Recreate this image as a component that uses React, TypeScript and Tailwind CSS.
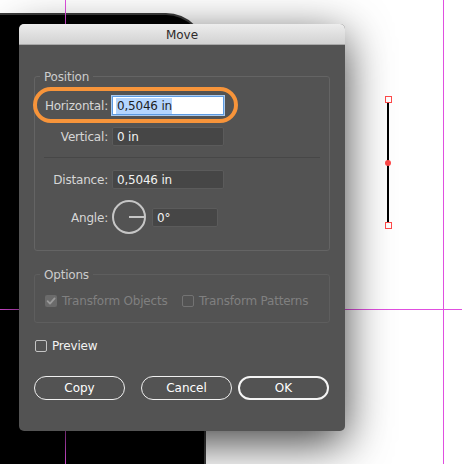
import React from "react";

function Box({ checked, disabled }: { checked?: boolean; disabled?: boolean }) {
  if (checked) {
    return (
      <div className="flex h-[12px] w-[12px] shrink-0 items-center justify-center rounded-[2px] bg-[#6b6b6b]">
        <svg width="12" height="12" viewBox="0 0 12 12">
          <path d="M2.6 6.2 L5 8.6 L9.6 3.4" fill="none" stroke="#9a9a9a" strokeWidth="1.8" strokeLinecap="round" strokeLinejoin="round" />
        </svg>
      </div>
    );
  }
  return (
    <div
      className={
        disabled
          ? "h-[12px] w-[12px] shrink-0 rounded-[2px] border border-[#737373]"
          : "h-[12px] w-[12px] shrink-0 rounded-[2px] border border-[#c4c4c4]"
      }
    />
  );
}

function Label({ children }: { children: React.ReactNode }) {
  return <div className="w-[73px] shrink-0 pt-[1px] text-right text-[#d6d6d6]">{children}</div>;
}

function DarkInput({ value, width }: { value: string; width: string }) {
  return (
    <div className={`flex h-[19px] items-center rounded-[2px] border border-[#5b5b5b] bg-[#464646] pl-[4px] pt-[1px] text-[#f2f2f2] ${width}`}>
      {value}
    </div>
  );
}

export default function App() {
  return (
    <div className="relative h-[464px] w-[462px] overflow-hidden bg-white font-['DejaVu_Sans',sans-serif] text-[12px] leading-[14px] tracking-[-0.2px]">
      {/* black artboard shape */}
      <div className="absolute left-[-10px] top-[13px] h-[470px] w-[216px] rounded-tr-[40px] border-r-2 border-t-2 border-[#3b3b3b] bg-black" />

      {/* guides */}
      <div className="absolute left-[65px] top-0 h-full w-px bg-[#e04fe0]" />
      <div className="absolute left-0 top-[309px] h-px w-full bg-[#e04fe0]" />
      <div className="absolute left-[443px] top-0 h-full w-px bg-[#e04fe0]" />

      {/* selected line */}
      <div className="absolute left-[387px] top-[102px] h-[121px] w-[2px] bg-black" />
      <div className="absolute left-[385px] top-[96px] h-[7px] w-[7px] border border-[#ff4a4a] bg-white" />
      <div className="absolute left-[385px] top-[222px] h-[7px] w-[7px] border border-[#ff4a4a] bg-white" />
      <div className="absolute left-[385px] top-[160px] h-[6px] w-[6px] rounded-full bg-[#ff4a4a]" />

      {/* dialog */}
      <div className="absolute left-[19px] top-[24px] flex h-[407px] w-[326px] flex-col overflow-hidden rounded-[5px] bg-[#535353] shadow-[0_12px_45px_rgba(0,0,0,0.75)]">
        <div className="flex h-[21px] shrink-0 items-center justify-center border-b border-[#a8a8a8] bg-gradient-to-b from-[#ededed] to-[#d2d2d2] pt-[1px] tracking-normal text-[#2e2a2a]">
          Move
        </div>

        <div className="flex flex-col px-[15px] pt-[24px]">
          <fieldset className="rounded-[3px] border border-[#646464] pb-[16px] pt-[12px]">
            <legend className="ml-[5px] px-[4px] pt-[1px] leading-[14px] text-[#cccccc]">Position</legend>

            <div className="flex h-[19px] items-center">
              <Label>Horizontal:</Label>
              <div className="ml-[4px] flex h-[19px] w-[112px] items-center border border-[#5d9ae0] bg-white pl-[3px] text-[#1e1e1e] shadow-[0_0_0_1px_#a9c9ee]">
                <span className="bg-[#b4d5fe] py-[1px] pl-[1px]">0,5046 in</span>
              </div>
            </div>

            <div className="mt-[12px] flex h-[19px] items-center">
              <Label>Vertical:</Label>
              <div className="ml-[4px]">
                <DarkInput value="0 in" width="w-[112px]" />
              </div>
            </div>

            <div className="mx-[9px] mt-[11px] h-px bg-[#474747]" />

            <div className="mt-[12px] flex h-[19px] items-center">
              <Label>Distance:</Label>
              <div className="ml-[4px]">
                <DarkInput value="0,5046 in" width="w-[112px]" />
              </div>
            </div>

            <div className="mt-[11px] flex h-[34px] items-center">
              <Label>Angle:</Label>
              <svg className="ml-[4px] shrink-0" width="34" height="34" viewBox="0 0 34 34">
                <circle cx="17" cy="17" r="16" fill="none" stroke="#c6c6c6" strokeWidth="2" />
                <line x1="17" y1="17" x2="33" y2="17" stroke="#c6c6c6" strokeWidth="2" />
              </svg>
              <div className="ml-[6px]">
                <DarkInput value="0°" width="w-[66px]" />
              </div>
            </div>
          </fieldset>

          <fieldset className="mt-[16px] rounded-[3px] border border-[#5e5e5e] pb-[14px] pl-[10px] pt-[12px]">
            <legend className="ml-[-5px] px-[4px] pt-[1px] leading-[14px] text-[#cccccc]">Options</legend>
            <div className="flex h-[14px] items-center text-[#808080]">
              <div className="flex w-[137px] items-center gap-[5px]">
                <Box checked />
                <span>Transform Objects</span>
              </div>
              <div className="flex items-center gap-[5px]">
                <Box disabled />
                <span>Transform Patterns</span>
              </div>
            </div>
          </fieldset>

          <div className="ml-[1px] mt-[16px] flex h-[14px] items-center gap-[5px] text-[#f2f2f2]">
            <Box />
            <span>Preview</span>
          </div>

          <div className="mt-[23px] flex h-[24px] items-center tracking-normal text-white">
            <div className="flex h-[24px] w-[91px] items-center justify-center rounded-full border border-[#f0f0f0]">Copy</div>
            <div className="ml-[16px] flex h-[24px] w-[91px] items-center justify-center rounded-full border border-[#f0f0f0]">Cancel</div>
            <div className="ml-[6px] flex h-[24px] w-[91px] items-center justify-center rounded-full border-2 border-[#f4f4f4]">OK</div>
          </div>
        </div>

        {/* orange annotation */}
        <div className="absolute left-[14px] top-[63px] h-[36px] w-[205px] rounded-full border-4 border-[#f7943a]" />
      </div>
    </div>
  );
}
